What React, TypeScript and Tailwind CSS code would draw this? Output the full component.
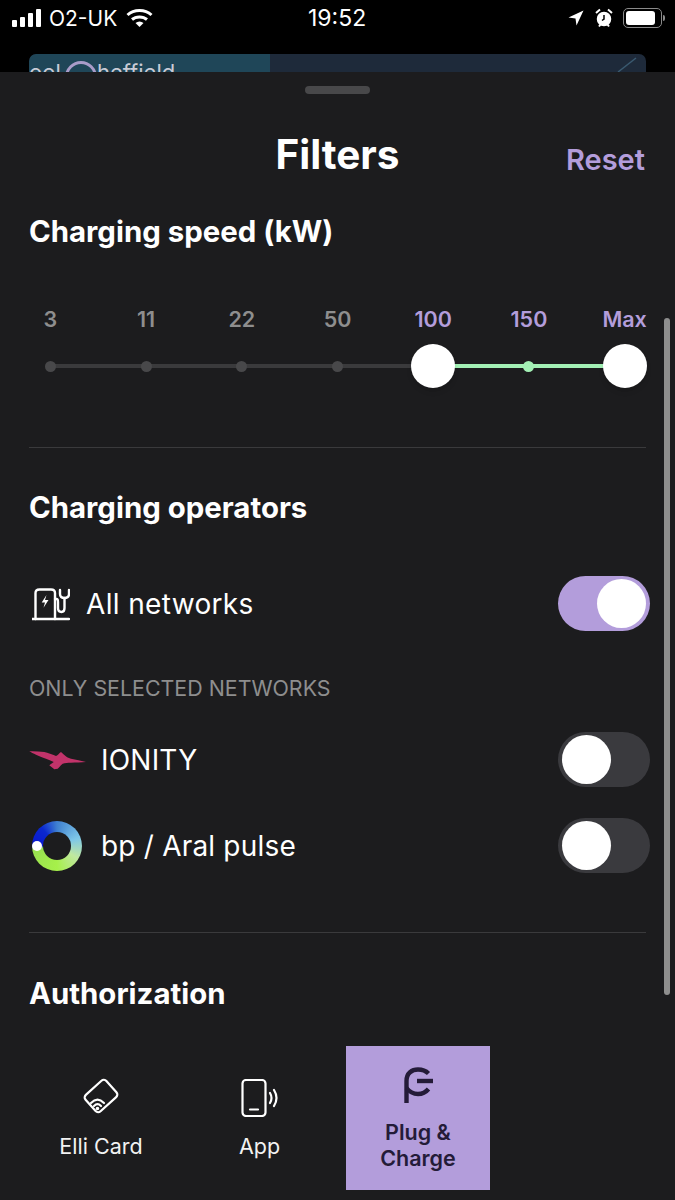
import React from "react"

const font = { fontFamily: "Inter, 'Liberation Sans', sans-serif" }

const speeds = ["3", "11", "22", "50", "100", "150", "Max"]

function StatusBar() {
  return (
    <div className="flex h-[36px] items-center justify-between pl-[12px] pr-[10px] text-white">
      <div className="flex items-center">
        <svg width="30" height="18" viewBox="0 0 30 18" fill="#fff">
          <rect x="0" y="11" width="5" height="7" rx="1" />
          <rect x="8" y="8" width="5" height="10" rx="1" />
          <rect x="16" y="4" width="5" height="14" rx="1" />
          <rect x="24" y="0" width="5" height="18" rx="1" />
        </svg>
        <span className="ml-[7px] text-[21px] leading-none">O2-UK</span>
        <svg className="ml-[9px]" width="27" height="20" viewBox="0 0 27 20" fill="none" stroke="#fff" strokeWidth="3">
          <path d="M1.5 7 C8 1 19 1 25.5 7" />
          <path d="M6 11.5 C10 8 17 8 21 11.5" />
          <path d="M13.5 19 L9.5 15 C12 13 15 13 17.5 15 Z" fill="#fff" stroke="none" />
        </svg>
      </div>
      <span className="absolute left-[308px] text-[23px] leading-none">19:52</span>
      <div className="flex items-center">
        <svg width="16" height="16" viewBox="0 0 16 16" fill="#fff">
          <path d="M15.5 0.5 L0.5 7.5 L7.5 8.5 L8.5 15.5 Z" />
        </svg>
        <svg className="ml-[11px]" width="18" height="20" viewBox="0 0 18 20" fill="none">
          <circle cx="9" cy="11" r="6.5" fill="#fff" stroke="#fff" strokeWidth="1.5" />
          <path d="M9 7 V11 L7 12.5" stroke="#000" strokeWidth="1.5" />
          <path d="M1 5 L5 1.5 M17 5 L13 1.5 M4 18.5 L5.5 16.5 M14 18.5 L12.5 16.5" stroke="#fff" strokeWidth="2" />
        </svg>
        <div className="ml-[10px] flex h-[20px] w-[39px] items-center rounded-[5px] border border-[#8a8a8a] p-[2px]">
          <div className="h-full w-[29px] rounded-[3px] bg-white" />
        </div>
        <div className="ml-[1px] h-[6px] w-[2px] rounded-r bg-[#8a8a8a]" />
      </div>
    </div>
  )
}

function MapPeek() {
  return (
    <div className="relative mx-[29px] mt-[18px] flex h-[18px] overflow-hidden rounded-t-[7px] bg-[#1e2a3a]">
      <div className="flex w-[241px] items-start overflow-hidden rounded-tl-[7px] bg-[#1f4658] pt-[7px] text-[22px] leading-none text-[#c9cbd6]">
        <span className="w-[36px] shrink-0">ool</span>
        <span className="h-[32px] w-[32px] shrink-0 rounded-full border-[3px] border-[#a99cc9]" />
        <span>heffield</span>
      </div>
      <svg className="absolute right-0 top-0" width="40" height="18" viewBox="0 0 40 18" fill="none" stroke="#3a5a70" strokeWidth="1.5">
        <path d="M12 18 L30 4" />
      </svg>
    </div>
  )
}

function Toggle({ on }: { on?: boolean }) {
  return (
    <div className={`flex h-[55px] w-[92px] items-center rounded-full px-[4px] ${on ? "justify-end bg-[#b39ddb]" : "justify-start bg-[#3a3a3e]"}`}>
      <div className="h-[49px] w-[49px] rounded-full bg-white" />
    </div>
  )
}

function Slider() {
  return (
    <div>
      <div className="ml-[-26.5px] grid w-[670px] grid-cols-7">
        {speeds.map((s, i) => (
          <div key={s} className={`text-center text-[21.5px] font-semibold leading-[28px] ${i >= 4 ? "text-[#b39ddb]" : "text-[#8e8e8e]"}`}>
            {s}
          </div>
        ))}
      </div>
      <div className="relative ml-[-26.5px] mt-[11px] grid h-[44px] w-[670px] grid-cols-7">
        <div className="absolute left-[48px] top-[20px] h-[4px] w-[383px] bg-[#3a3a3c]" />
        <div className="absolute left-[431px] top-[20px] h-[4px] w-[192px] bg-[#a3f0b5]" />
        {speeds.map((s, i) => (
          <div key={s} className="relative flex items-center justify-center">
            {i === 4 || i === 6 ? (
              <div className="h-[44px] w-[44px] shrink-0 rounded-full bg-white shadow-md" />
            ) : (
              <div className={`h-[11px] w-[11px] rounded-full ${i === 5 ? "bg-[#a3f0b5]" : "bg-[#48484a]"}`} />
            )}
          </div>
        ))}
      </div>
    </div>
  )
}

function ChargerIcon() {
  return (
    <svg width="38" height="34" viewBox="0 0 38 34" fill="none" stroke="#fff" strokeWidth="2.4" strokeLinecap="round">
      <path d="M0.5 32 H37" />
      <path d="M3.5 32 V6 Q3.5 2.5 7.5 2.5 H19 Q23 2.5 23 6 V32" />
      <path d="M14.5 8 L9.7 15.5 H13 L11.5 20.7 L16.5 13 H13 L14.5 8 Z" fill="#fff" stroke="none" />
      <path d="M23 12 H24.5 Q26 12 26 15 V21 Q26 25 29.5 25 Q32.5 25 32.5 21 V11" />
      <path d="M28 3 V7 Q28 11 32.5 11 Q37 11 37 7 V3" />
    </svg>
  )
}

function IonityLogo() {
  return (
    <svg width="58" height="20" viewBox="0 0 58 20" fill="#c2336a">
      <path d="M0.3 1.3 C5 1 10 1.5 15.3 2 C19 2.5 23 4.5 27 6 C29 5.5 30 3 32 2 L35 4.7 C37 6.5 39 8 42 8.7 C47 9.5 52 10.5 57 12 C52 12.5 47 12.3 42 12.7 C39 12.8 36 13 33.7 13.7 C31.5 15.5 30 17.5 28.7 18.7 L25.3 19.3 L20.3 15.3 L24.7 12 C22 10.5 19.5 9.5 17 8.7 C13 7.5 10 6 7 4.7 C4.5 3.5 2 2.5 0.3 1.3 Z" />
    </svg>
  )
}

function PulseLogo() {
  return (
    <div className="relative h-[50px] w-[50px] rounded-full bg-[conic-gradient(from_0deg,#3f80d0_0deg,#7fc8e8_70deg,#c0e8a0_120deg,#a6f04a_180deg,#98e050_262deg,#0a18d0_272deg,#0a28d0_320deg,#3f80d0_360deg)]">
      <div className="absolute left-[11px] top-[11px] h-[28px] w-[28px] rounded-full bg-[#1c1c1e]" />
      <div className="absolute left-[0px] top-[20px] h-[10px] w-[10px] rounded-full bg-white" />
    </div>
  )
}

function CardIcon() {
  return (
    <svg width="40" height="40" viewBox="0 0 40 40" fill="none" stroke="#fff" strokeWidth="2.2" strokeLinecap="round">
      <rect x="6" y="9" width="28" height="22" rx="3.5" transform="rotate(-42 20 20)" />
      <path d="M10 27 Q16.5 20.5 23 27 M13 30 Q16.5 26.5 20 30" />
      <circle cx="16.5" cy="32.5" r="0.7" fill="#fff" />
    </svg>
  )
}

function PhoneIcon() {
  return (
    <svg className="mt-[3px]" width="38" height="38" viewBox="0 0 38 38" fill="none" stroke="#fff" strokeWidth="2.2" strokeLinecap="round">
      <rect x="1.5" y="1" width="23" height="36" rx="3.5" />
      <path d="M9 30.5 H17" />
      <path d="M29 14 Q32 19 29 24 M33 11 Q38 19 33 27" />
    </svg>
  )
}

function PlugChargeIcon() {
  return (
    <svg width="30" height="36" viewBox="0 0 30 36" fill="none" stroke="#241b38" strokeWidth="4.4">
      <path d="M3.5 36 V14 C3.5 6 9 2.5 15 2.5 C19 2.5 23 4 25.5 6.5" />
      <path d="M14 14 H30" />
      <path d="M25.5 22 C23 25 19 27 15 27 C10.5 27 6.5 25 3.5 21" />
    </svg>
  )
}

function AuthCard({ label, icon, active }: { label: React.ReactNode; icon: React.ReactNode; active?: boolean }) {
  return (
    <div className={`flex h-[144px] w-[144px] flex-col items-center ${active ? "bg-[#b39ddb] pt-[21px] font-semibold text-[#241b38]" : "pt-[30px] text-[#f2f2f2]"}`}>
      <div className={active ? "h-[36px]" : "h-[40px]"}>{icon}</div>
      <div className={`text-center text-[21.5px] ${active ? "mt-[16px] leading-[26px]" : "mt-[17px] leading-[27px]"}`}>{label}</div>
    </div>
  )
}

export default function App() {
  return (
    <div className="relative h-[1200px] w-[675px] overflow-hidden bg-black" style={font}>
      <StatusBar />
      <MapPeek />
      <div className="relative h-[1128px] bg-[#1c1c1e] px-[29px] text-white">
        <div className="mx-auto h-[22px] pt-[14px]">
          <div className="mx-auto h-[8px] w-[65px] rounded-full bg-[#48484a]" />
        </div>
        <div className="relative mt-[37px] flex h-[48px] items-center justify-center">
          <h1 className="text-[40.5px] font-bold leading-none">Filters</h1>
          <span className="absolute right-[1px] top-[14px] text-[29px] font-semibold leading-none text-[#b39ddb]">Reset</span>
        </div>

        <h2 className="mt-[35px] text-[29.4px] font-bold leading-[36px]">Charging speed (kW)</h2>
        <div className="mt-[55px]">
          <Slider />
        </div>
        <div className="mt-[59px] h-px w-[617px] bg-[#3a3a3c]" />

        <h2 className="mt-[42px] text-[29.4px] font-bold leading-[36px]">Charging operators</h2>
        <div className="mt-[50px] flex h-[55px] w-[621px] items-center justify-between">
          <div className="flex items-center">
            <span className="ml-[3px]"><ChargerIcon /></span>
            <span className="ml-[16px] text-[28px] leading-none tracking-[0.35px]">All networks</span>
          </div>
          <Toggle on />
        </div>

        <div className="mt-[43px] text-[21.4px] leading-[28px] text-[#8e8e8e]">ONLY SELECTED NETWORKS</div>

        <div className="mt-[30px] flex h-[55px] w-[621px] items-center justify-between">
          <div className="flex items-center">
            <IonityLogo />
            <span className="ml-[14px] text-[28px] leading-none tracking-[0.2px]">IONITY</span>
          </div>
          <Toggle />
        </div>
        <div className="mt-[31px] flex h-[55px] w-[621px] items-center justify-between">
          <div className="flex items-center">
            <span className="ml-[3px]"><PulseLogo /></span>
            <span className="ml-[19px] text-[28px] leading-none tracking-[0.2px]">bp / Aral pulse</span>
          </div>
          <Toggle />
        </div>

        <div className="mt-[59px] h-px w-[617px] bg-[#3a3a3c]" />
        <h2 className="mt-[43px] text-[29.4px] font-bold leading-[36px]">Authorization</h2>

        <div className="mt-[34px] flex gap-[14.5px]">
          <AuthCard label="Elli Card" icon={<CardIcon />} />
          <AuthCard label="App" icon={<PhoneIcon />} />
          <AuthCard label={<>Plug &<br />Charge</>} icon={<PlugChargeIcon />} active />
        </div>

        <div className="absolute left-[664px] top-[246px] h-[677px] w-[6px] rounded-full bg-[#8e8e8e]" />
      </div>
    </div>
  )
}
